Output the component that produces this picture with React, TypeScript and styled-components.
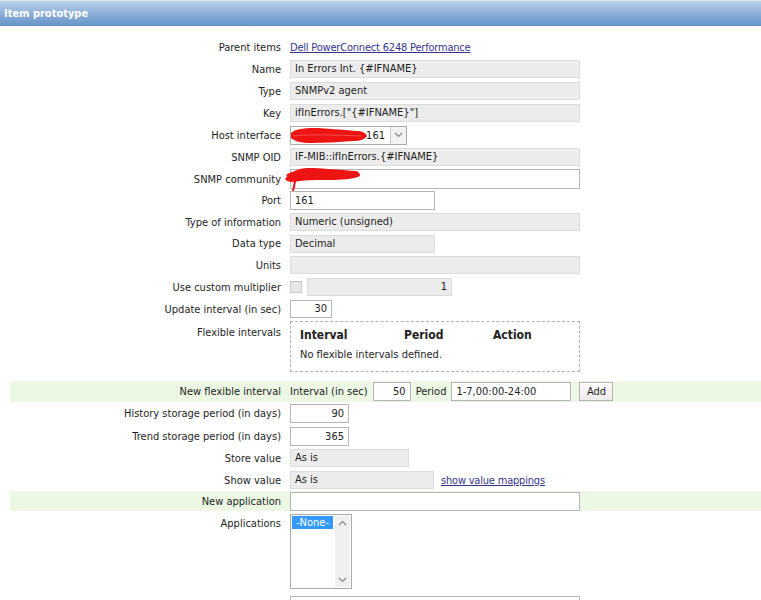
import styled, { createGlobalStyle } from "styled-components";

const GlobalStyle = createGlobalStyle`
  html, body { margin: 0; padding: 0; background: #fff; }
  body {
    font-family: "DejaVu Sans Condensed", "Liberation Sans", sans-serif;
    font-size: 11px;
    color: #1e1e1e;
  }
`;

const Page = styled.div`
  width: 761px;
  height: 600px;
  overflow: hidden;
`;

const Header = styled.div`
  height: 25px;
  border-top: 1px solid #dbe7f4;
  background: linear-gradient(#bcd3ec, #90b3d9 45%, #6594c8);
  color: #fff;
  font-weight: bold;
  font-size: 11px;
  line-height: 25px;
  padding-left: 4px;
`;

const Form = styled.div`
  margin: 10px 0 0 10px;
`;

const Row = styled.div<{ $green?: boolean; $h?: number; $top?: boolean; $padTop?: number }>`
  box-sizing: border-box;
  display: grid;
  grid-template-columns: 271px 1fr;
  column-gap: 9px;
  align-items: ${(p) => (p.$top ? "start" : "center")};
  height: ${(p) => p.$h ?? 22}px;
  padding-top: ${(p) => p.$padTop ?? 0}px;
  background: ${(p) => (p.$green ? "#ecf7e4" : "transparent")};
`;

const Label = styled.div<{ $top?: number }>`
  text-align: right;
  white-space: nowrap;
  padding-top: ${(p) => p.$top ?? 0}px;
`;

const Field = styled.div`
  position: relative;
  display: flex;
  align-items: center;
  gap: 5px;
`;

const Link = styled.a<{ $ml?: number }>`
  color: #34348f;
  text-decoration: underline;
  cursor: pointer;
  letter-spacing: -0.2px;
  margin-left: ${(p) => p.$ml ?? 0}px;
`;

const Input = styled.div<{ $w: number; $ro?: boolean; $right?: boolean; $h?: number }>`
  box-sizing: border-box;
  width: ${(p) => p.$w}px;
  height: ${(p) => p.$h ?? 18}px;
  line-height: ${(p) => (p.$h ?? 18) - 2}px;
  padding: 0 4px;
  border: 1px solid ${(p) => (p.$ro ? "#dcdcdc" : "#b4b4b4")};
  background: ${(p) => (p.$ro ? "#ececec" : "#fff")};
  text-align: ${(p) => (p.$right ? "right" : "left")};
  white-space: nowrap;
  overflow: hidden;
`;

const Select = styled.div`
  box-sizing: border-box;
  width: 117px;
  height: 19px;
  border: 1px solid #a9a9a9;
  background: #fff;
  display: flex;
  align-items: center;
  justify-content: flex-end;
  position: relative;
`;

const SelectValue = styled.span`
  padding-right: 5px;
`;

const SelectArrow = styled.span`
  width: 15px;
  height: 17px;
  border-left: 1px solid #c8c8c8;
  background: #f2f2f2;
  display: flex;
  align-items: center;
  justify-content: center;
`;

const Checkbox = styled.span`
  box-sizing: border-box;
  width: 12px;
  height: 12px;
  border: 1px solid #c8c8c8;
  background: #e6e6e6;
`;

const FlexBox = styled.div`
  box-sizing: border-box;
  width: 290px;
  height: 51px;
  border: 1px dashed #a6aec8;
  padding: 5px 9px;
`;

const FlexHead = styled.div`
  display: grid;
  grid-template-columns: 104px 89px 1fr;
  font-weight: bold;
  font-size: 12px;
  color: #222;
  margin-top: 1px;
`;

const FlexEmpty = styled.div`
  margin-top: 6px;
`;

const Button = styled.div`
  box-sizing: border-box;
  width: 34px;
  height: 19px;
  margin-left: 3px;
  border: 1px solid #b4b4b4;
  background: linear-gradient(#fdfdfd, #ececec);
  text-align: center;
  line-height: 17px;
`;

const ListBox = styled.div`
  box-sizing: border-box;
  width: 62px;
  height: 75px;
  border: 1px solid #a9a9a9;
  background: #fff;
  display: flex;
  padding: 1px;
`;

const ListItems = styled.div`
  flex: 1;
`;

const ListItem = styled.div<{ $sel?: boolean }>`
  background: ${(p) => (p.$sel ? "#3399ff" : "transparent")};
  color: ${(p) => (p.$sel ? "#fff" : "#222")};
  padding: 0 4px;
  line-height: 13px;
  width: fit-content;
`;

const ScrollBar = styled.div`
  width: 15px;
  background: #f0f0f0;
  display: flex;
  flex-direction: column;
  justify-content: space-between;
  align-items: center;
  padding: 4px 0;
`;

const Scribble = styled.svg<{ $left: number; $top: number }>`
  position: absolute;
  left: ${(p) => p.$left}px;
  top: ${(p) => p.$top}px;
  pointer-events: none;
`;

const Chevron = ({ up }: { up?: boolean }) => (
  <svg width="9" height="6" viewBox="0 0 9 6">
    <path
      d={up ? "M1 5 L4.5 1.5 L8 5" : "M1 1 L4.5 4.5 L8 1"}
      fill="none"
      stroke="#8a8a8a"
      strokeWidth="1.2"
    />
  </svg>
);

export default function App() {
  return (
    <Page>
      <GlobalStyle />
      <Header>Item prototype</Header>
      <Form>
        <Row>
          <Label>Parent items</Label>
          <Field>
            <Link>Dell PowerConnect 6248 Performance</Link>
          </Field>
        </Row>
        <Row>
          <Label>Name</Label>
          <Field>
            <Input $w={290} $ro>In Errors Int. {"{#IFNAME}"}</Input>
          </Field>
        </Row>
        <Row>
          <Label>Type</Label>
          <Field>
            <Input $w={290} $ro>SNMPv2 agent</Input>
          </Field>
        </Row>
        <Row>
          <Label>Key</Label>
          <Field>
            <Input $w={290} $ro>ifInErrors.["{"{#IFNAME}"}"]</Input>
          </Field>
        </Row>
        <Row>
          <Label>Host interface</Label>
          <Field>
            <Select>
              <SelectValue>161</SelectValue>
              <SelectArrow>
                <Chevron />
              </SelectArrow>
              <Scribble $left={0} $top={0} width="78" height="17" viewBox="0 0 78 17">
                <path
                  d="M0 6 C6 1 16 1 28 1 C42 2 56 3 66 4 C71 4 75 6 76 9 C74 12 70 14 62 14 C48 15 34 16 20 16 C10 16 3 14 0 11 Z"
                  fill="#ee1414"
                />
                <path d="M2 9 C20 7 44 8 70 9" stroke="#f35050" strokeWidth="1" fill="none" />
              </Scribble>
            </Select>
          </Field>
        </Row>
        <Row>
          <Label>SNMP OID</Label>
          <Field>
            <Input $w={290} $ro>IF-MIB::ifInErrors.{"{#IFNAME}"}</Input>
          </Field>
        </Row>
        <Row>
          <Label>SNMP community</Label>
          <Field>
            <Input $w={290} $h={20} />
            <Scribble $left={-6} $top={-2} width="80" height="26" viewBox="0 0 80 26">
              <path
                d="M1 12 C6 5 14 1 24 1 C38 1 56 3 70 4 C74 4 76 6 76 9 C70 12 58 13 44 13 C32 13 22 13 16 14 C10 15 4 16 1 12 Z"
                fill="#ee1414"
              />
              <path d="M12 10 L9 24" stroke="#ee1414" strokeWidth="2" fill="none" />
              <path d="M3 9 C10 4 16 6 26 9" stroke="#ee1414" strokeWidth="3" fill="none" />
            </Scribble>
          </Field>
        </Row>
        <Row $h={21}>
          <Label>Port</Label>
          <Field>
            <Input $w={145} $h={19}>161</Input>
          </Field>
        </Row>
        <Row>
          <Label>Type of information</Label>
          <Field>
            <Input $w={290} $ro>Numeric (unsigned)</Input>
          </Field>
        </Row>
        <Row $h={21}>
          <Label>Data type</Label>
          <Field>
            <Input $w={145} $ro>Decimal</Input>
          </Field>
        </Row>
        <Row>
          <Label>Units</Label>
          <Field>
            <Input $w={290} $ro />
          </Field>
        </Row>
        <Row>
          <Label>Use custom multiplier</Label>
          <Field>
            <Checkbox />
            <Input $w={145} $ro $right>
              1
            </Input>
          </Field>
        </Row>
        <Row>
          <Label>Update interval (in sec)</Label>
          <Field>
            <Input $w={42} $right>
              30
            </Input>
          </Field>
        </Row>
        <Row $h={61} $top $padTop={1}>
          <Label $top={5}>Flexible intervals</Label>
          <Field>
            <FlexBox>
              <FlexHead>
                <span>Interval</span>
                <span>Period</span>
                <span>Action</span>
              </FlexHead>
              <FlexEmpty>No flexible intervals defined.</FlexEmpty>
            </FlexBox>
          </Field>
        </Row>
        <Row $green $h={21}>
          <Label>New flexible interval</Label>
          <Field>
            <span>Interval (in sec)</span>
            <Input $w={38} $h={19} $right>
              50
            </Input>
            <span>Period</span>
            <Input $w={120} $h={19}>1-7,00:00-24:00</Input>
            <Button>Add</Button>
          </Field>
        </Row>
        <Row $h={23}>
          <Label>History storage period (in days)</Label>
          <Field>
            <Input $w={59} $h={19} $right>
              90
            </Input>
          </Field>
        </Row>
        <Row>
          <Label>Trend storage period (in days)</Label>
          <Field>
            <Input $w={59} $h={19} $right>
              365
            </Input>
          </Field>
        </Row>
        <Row>
          <Label>Store value</Label>
          <Field>
            <Input $w={119} $ro>As is</Input>
          </Field>
        </Row>
        <Row>
          <Label>Show value</Label>
          <Field>
            <Input $w={144} $ro>As is</Input>
            <Link $ml={2}>show value mappings</Link>
          </Field>
        </Row>
        <Row $green $h={20}>
          <Label>New application</Label>
          <Field>
            <Input $w={290} $h={19} />
          </Field>
        </Row>
        <Row $h={83} $top $padTop={3}>
          <Label $top={3}>Applications</Label>
          <Field>
            <ListBox>
              <ListItems>
                <ListItem $sel>-None-</ListItem>
              </ListItems>
              <ScrollBar>
                <Chevron up />
                <Chevron />
              </ScrollBar>
            </ListBox>
          </Field>
        </Row>
        <Row>
          <Label />
          <Field>
            <Input $w={290} $h={19} />
          </Field>
        </Row>
      </Form>
    </Page>
  );
}
